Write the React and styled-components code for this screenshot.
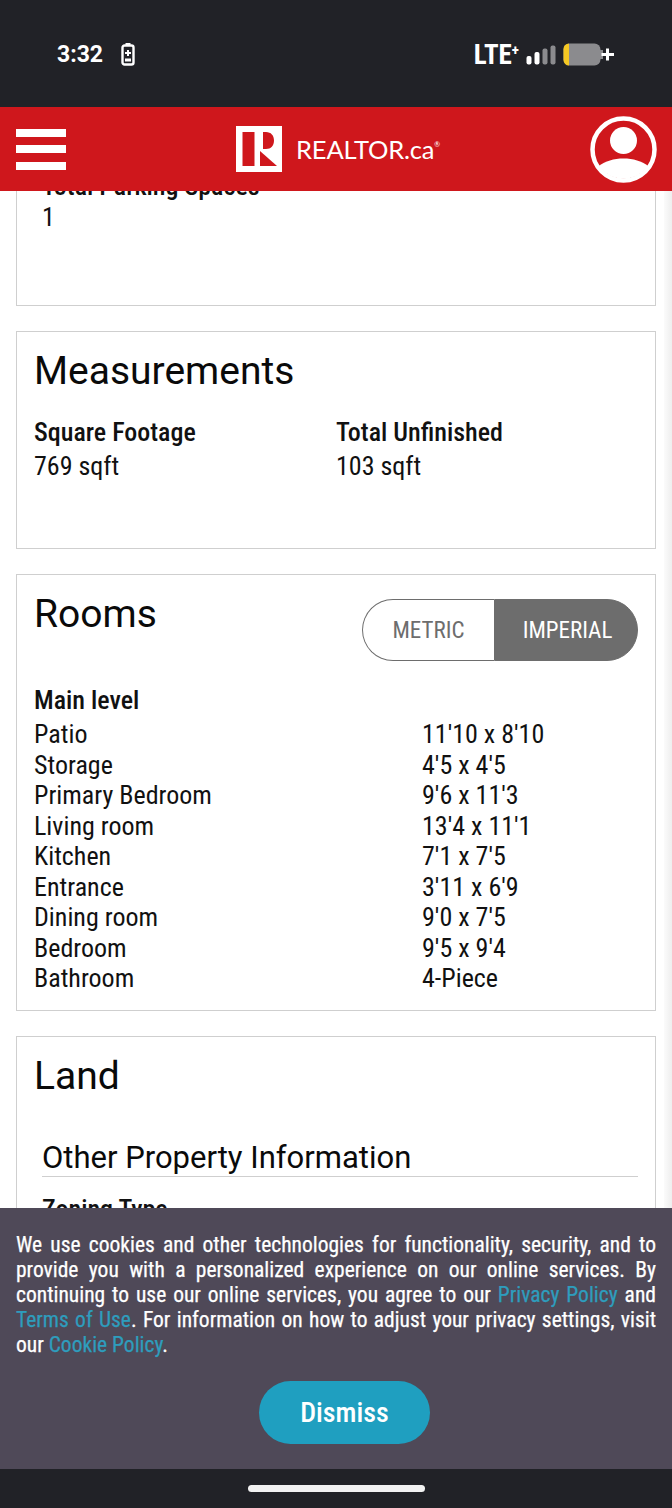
import React from "react";
import styled, { createGlobalStyle } from "styled-components";

const GlobalStyle = createGlobalStyle`
  html, body {
    margin: 0;
    padding: 0;
    background: #fff;
  }
  * {
    box-sizing: border-box;
  }
`;

const Screen = styled.div`
  width: 672px;
  height: 1508px;
  display: flex;
  flex-direction: column;
  overflow: hidden;
  font-family: Roboto, "Liberation Sans", sans-serif;
  font-stretch: 85%;
  color: #111;
`;

const StatusBar = styled.div`
  height: 107px;
  flex: none;
  background: #212227;
  color: #fff;
  display: flex;
  align-items: center;
  justify-content: space-between;
  padding: 2px 57px 0 57px;
`;

const StatusGroup = styled.div`
  display: flex;
  align-items: center;
  gap: ${(p) => p.$gap}px;
`;

const Clock = styled.span`
  font-stretch: 100%;
  font-size: 23px;
  font-weight: 700;
`;

const Lte = styled.span`
  font-size: 27px;
  font-weight: 700;
  line-height: 26px;
`;

const Sup = styled.sup`
  font-size: 15px;
  vertical-align: 9px;
  line-height: 0;
`;

const Header = styled.header`
  height: 84px;
  flex: none;
  background: #cf171c;
  display: flex;
  align-items: center;
  justify-content: space-between;
  padding: 0 15px 0 16px;
  position: relative;
  z-index: 2;
`;

const Burger = styled.div`
  width: 50px;
  display: flex;
  flex-direction: column;
  gap: 8.5px;
`;

const BurgerLine = styled.div`
  height: 8px;
  background: #fff;
`;

const Logo = styled.div`
  display: flex;
  align-items: center;
  gap: 14px;
  margin-left: 20px;
`;

const LogoText = styled.span`
  font-family: Lato, "Liberation Sans", sans-serif;
  font-stretch: 100%;
  font-weight: 400;
  color: #fff;
  font-size: 25.5px;
  letter-spacing: -0.2px;
`;

const LogoMark = styled.sup`
  font-size: 7px;
  line-height: 0;
  vertical-align: 12px;
`;

const Main = styled.main`
  flex: 1;
  min-height: 0;
  overflow: hidden;
  padding: 0 16px;
  display: flex;
  flex-direction: column;
  gap: 25px;
  position: relative;

  /* scrollbar shadow on the right edge */
  &::after {
    content: "";
    position: absolute;
    top: 0;
    bottom: 0;
    right: 0;
    width: 8px;
    background: linear-gradient(to right, rgba(235, 235, 235, 0.2), #eeeeee);
  }
`;

const Card = styled.section`
  flex: none;
  height: ${(p) => p.$height}px;
  margin-top: ${(p) => p.$offset || 0}px;
  border: 1px solid #cfcfcf;
  padding: 17px 17px 0;
  background: #fff;
`;

const CardTitle = styled.h2`
  margin: 0;
  font-size: 39px;
  line-height: 44px;
  font-weight: 400;
  font-stretch: 100%;
  color: #0a0a0a;
`;

const TitleRow = styled.div`
  display: flex;
  justify-content: space-between;
  align-items: flex-start;
`;

const FieldGrid = styled.div`
  display: grid;
  grid-template-columns: 302px 1fr;
  margin-top: 22px;
`;

const Label = styled.div`
  font-size: 26px;
  line-height: 34px;
  font-weight: 500;
`;

const Value = styled.div`
  font-size: 26px;
  line-height: 34px;
`;

const ParkingValue = styled(Value)`
  margin-top: -3px;
`;

const Indented = styled.div`
  padding-left: 8px;
`;

const Toggle = styled.div`
  display: flex;
  width: 276px;
  height: 62px;
  margin-top: 7px;
`;

const ToggleOption = styled.div`
  width: ${(p) => (p.$active ? 144 : 132)}px;
  display: flex;
  align-items: center;
  justify-content: center;
  padding-left: ${(p) => (p.$active ? 3 : 0)}px;
  font-size: 23px;
  color: ${(p) => (p.$active ? "#fff" : "#6d6d6d")};
  background: ${(p) => (p.$active ? "#6d6d6d" : "#fff")};
  border: 1px solid #6d6d6d;
  border-width: ${(p) => (p.$active ? "1px" : "1px 0 1px 1px")};
  border-radius: ${(p) => (p.$active ? "0 31px 31px 0" : "31px 0 0 31px")};
`;

const LevelName = styled.div`
  font-size: 26px;
  line-height: 30px;
  font-weight: 500;
  margin: 24px 0 4px;
`;

const RoomRow = styled.div`
  display: grid;
  grid-template-columns: 388px 1fr;
  font-size: 26px;
  line-height: 30.5px;
`;

const SubTitle = styled.h3`
  margin: 41px 0 15px 8px;
  font-size: 31px;
  line-height: 37px;
  font-weight: 400;
  font-stretch: 100%;
  color: #0a0a0a;
  border-bottom: 1px solid #cfcfcf;
`;

const Cookie = styled.div`
  height: 261px;
  flex: none;
  background: #4f4958;
  color: #fff;
  padding: 24px 16px 0;
  display: flex;
  flex-direction: column;
  align-items: center;
  position: relative;
  z-index: 2;
`;

const CookieText = styled.p`
  margin: 0;
  width: 100%;
  font-size: 21.5px;
  line-height: 25px;
  text-align: justify;
  -webkit-text-stroke: 0.25px currentColor;
`;

const CookieLink = styled.a`
  color: #2e9dbd;
`;

const Dismiss = styled.button`
  width: 171px;
  height: 63px;
  margin: 24px 0 0 17px;
  border: none;
  border-radius: 32px;
  background: #1f9fc0;
  color: #fff;
  font: inherit;
  font-size: 28px;
  font-weight: 500;
`;

const NavBar = styled.div`
  height: 39px;
  flex: none;
  background: #212227;
  display: flex;
  justify-content: center;
  padding-top: 16px;
`;

const HomeBar = styled.div`
  width: 177px;
  height: 7px;
  border-radius: 4px;
  background: #f2f2f2;
`;

const rooms = [
  ["Patio", "11'10 x 8'10"],
  ["Storage", "4'5 x 4'5"],
  ["Primary Bedroom", "9'6 x 11'3"],
  ["Living room", "13'4 x 11'1"],
  ["Kitchen", "7'1 x 7'5"],
  ["Entrance", "3'11 x 6'9"],
  ["Dining room", "9'0 x 7'5"],
  ["Bedroom", "9'5 x 9'4"],
  ["Bathroom", "4-Piece"],
];

const BatterySaver = () => (
  <svg width="14" height="23" viewBox="0 0 14 23" fill="none">
    <rect x="4.500" y="0" width="5" height="3" fill="#fff" />
    <rect x="1.500" y="2.500" width="11" height="19" rx="2" stroke="#fff" strokeWidth="2.400" />
    <path d="M7 7v6M4 10h6" stroke="#fff" strokeWidth="2" />
    <rect x="4" y="15.500" width="6" height="3" fill="#fff" />
  </svg>
);

const Signal = () => (
  <svg width="30" height="20" viewBox="0 0 30 20">
    <rect x="0.500" y="11" width="5" height="8.500" rx="2" fill="#fff" />
    <rect x="8.500" y="7" width="5" height="12.500" rx="2" fill="#fff" />
    <rect x="16.500" y="3.500" width="5" height="16" rx="2" fill="#8b8b8e" />
    <rect x="24.500" y="0.500" width="5" height="19" rx="2" fill="#8b8b8e" />
  </svg>
);

const Battery = () => (
  <svg width="52" height="23" viewBox="0 0 52 23">
    <rect x="0.500" y="0.500" width="37" height="22" rx="6" fill="#8b8b8e" />
    <path d="M6 0.500H6a5.500 5.500 0 0 0-5.500 5.500v11a5.500 5.500 0 0 0 5.500 5.500z" fill="#f5c823" />
    <rect x="37" y="7" width="3" height="9" fill="#8b8b8e" />
    <path d="M44.500 5.500v12M38.500 11.500h12.500" stroke="#fff" strokeWidth="3" />
  </svg>
);

const RealtorLogo = () => (
  <svg width="46" height="46" viewBox="0 0 46 46">
    <rect width="46" height="46" fill="#fff" />
    <rect x="6.500" y="6" width="12" height="34" fill="#cf171c" />
    <path d="M24 6h6c5 0 8 3.500 8 8.500s-3 8.500-8 8.500h-3V6z" fill="#cf171c" />
    <path d="M24 25l17 15H24z" fill="#cf171c" />
  </svg>
);

const Profile = () => (
  <svg width="67" height="67" viewBox="0 0 67 67">
    <circle cx="33.500" cy="33.500" r="31" fill="none" stroke="#fff" strokeWidth="4.500" />
    <circle cx="33.500" cy="24.500" r="13.500" fill="#fff" />
    <path d="M9 50c6-5 15-7.500 24.500-7.500S52 45 58 50a30 30 0 0 1-49 0z" fill="#fff" />
  </svg>
);

export default function App() {
  return (
    <Screen>
      <GlobalStyle />
      <StatusBar>
        <StatusGroup $gap={18}>
          <Clock>3:32</Clock>
          <BatterySaver />
        </StatusGroup>
        <StatusGroup $gap={7}>
          <Lte>
            LTE<Sup>+</Sup>
          </Lte>
          <Signal />
          <Battery />
        </StatusGroup>
      </StatusBar>

      <Header>
        <Burger>
          <BurgerLine />
          <BurgerLine />
          <BurgerLine />
        </Burger>
        <Logo>
          <RealtorLogo />
          <LogoText>
            REALTOR.ca<LogoMark>®</LogoMark>
          </LogoText>
        </Logo>
        <Profile />
      </Header>

      <Main>
        <Card $height={155} $offset={-40}>
          <Indented>
            <Label>Total Parking Spaces</Label>
            <ParkingValue>1</ParkingValue>
          </Indented>
        </Card>

        <Card $height={218}>
          <CardTitle>Measurements</CardTitle>
          <FieldGrid>
            <div>
              <Label>Square Footage</Label>
              <Value>769 sqft</Value>
            </div>
            <div>
              <Label>Total Unfinished</Label>
              <Value>103 sqft</Value>
            </div>
          </FieldGrid>
        </Card>

        <Card $height={437}>
          <TitleRow>
            <CardTitle>Rooms</CardTitle>
            <Toggle>
              <ToggleOption>METRIC</ToggleOption>
              <ToggleOption $active>IMPERIAL</ToggleOption>
            </Toggle>
          </TitleRow>
          <LevelName>Main level</LevelName>
          {rooms.map(([name, size]) => (
            <RoomRow key={name}>
              <span>{name}</span>
              <span>{size}</span>
            </RoomRow>
          ))}
        </Card>

        <Card $height={300}>
          <CardTitle>Land</CardTitle>
          <SubTitle>Other Property Information</SubTitle>
          <Indented>
            <Label>Zoning Type</Label>
          </Indented>
        </Card>
      </Main>

      <Cookie>
        <CookieText>
          We use cookies and other technologies for functionality, security, and to provide you
          with a personalized experience on our online services. By continuing to use our online
          services, you agree to our <CookieLink>Privacy Policy</CookieLink> and{" "}
          <CookieLink>Terms of Use</CookieLink>. For information on how to adjust your privacy
          settings, visit our <CookieLink>Cookie Policy</CookieLink>.
        </CookieText>
        <Dismiss>Dismiss</Dismiss>
      </Cookie>

      <NavBar>
        <HomeBar />
      </NavBar>
    </Screen>
  );
}
